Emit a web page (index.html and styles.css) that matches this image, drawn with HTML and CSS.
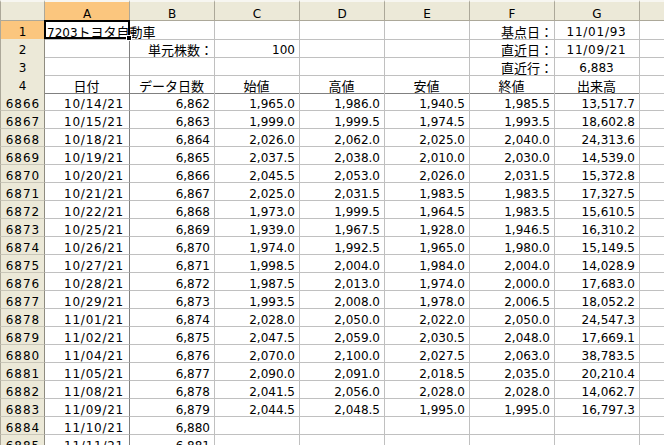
FILE: index.html
```html
<!DOCTYPE html>
<html lang="ja">
<head>
<meta charset="utf-8">
<title>Sheet</title>
<link rel="stylesheet" href="styles.css">
</head>
<body>
<div class="sheet">
  <div class="row hdr">
    <div class="h corner"></div>
    <div class="h col on">A</div>
    <div class="h col">B</div>
    <div class="h col">C</div>
    <div class="h col">D</div>
    <div class="h col">E</div>
    <div class="h col">F</div>
    <div class="h col">G</div>
    <div class="h col last"></div>
  </div>

  <div class="row">
    <div class="rh on">1</div>
    <div class="c a active"><span class="ov">7203<span class="jp">トヨタ自動車</span></span><div class="sel"><span class="handle"></span></div></div>
    <div class="c"></div>
    <div class="c"></div>
    <div class="c"></div>
    <div class="c"></div>
    <div class="c n lbl"><span class="jp">基点日：</span></div>
    <div class="c ct d">11/01/93</div>
    <div class="c x"></div>
  </div>
  <div class="row">
    <div class="rh">2</div>
    <div class="c a"></div>
    <div class="c n lbl"><span class="jp">単元株数：</span></div>
    <div class="c n">100</div>
    <div class="c"></div>
    <div class="c"></div>
    <div class="c n lbl"><span class="jp">直近日：</span></div>
    <div class="c ct d">11/09/21</div>
    <div class="c x"></div>
  </div>
  <div class="row">
    <div class="rh">3</div>
    <div class="c a"></div>
    <div class="c"></div>
    <div class="c"></div>
    <div class="c"></div>
    <div class="c"></div>
    <div class="c n lbl"><span class="jp">直近行：</span></div>
    <div class="c ct">6,883</div>
    <div class="c x"></div>
  </div>
  <div class="row titles">
    <div class="rh">4</div>
    <div class="c a ct"><span class="jp">日付</span></div>
    <div class="c ct"><span class="jp">データ日数</span></div>
    <div class="c ct"><span class="jp">始値</span></div>
    <div class="c ct"><span class="jp">高値</span></div>
    <div class="c ct"><span class="jp">安値</span></div>
    <div class="c ct"><span class="jp">終値</span></div>
    <div class="c ct"><span class="jp">出来高</span></div>
    <div class="c x"></div>
  </div>

  <div class="row"><div class="rh">6866</div><div class="c a n d">10/14/21</div><div class="c n">6,862</div><div class="c n">1,965.0</div><div class="c n">1,986.0</div><div class="c n">1,940.5</div><div class="c n">1,985.5</div><div class="c n">13,517.7</div><div class="c x"></div></div>
  <div class="row"><div class="rh">6867</div><div class="c a n d">10/15/21</div><div class="c n">6,863</div><div class="c n">1,999.0</div><div class="c n">1,999.5</div><div class="c n">1,974.5</div><div class="c n">1,993.5</div><div class="c n">18,602.8</div><div class="c x"></div></div>
  <div class="row"><div class="rh">6868</div><div class="c a n d">10/18/21</div><div class="c n">6,864</div><div class="c n">2,026.0</div><div class="c n">2,062.0</div><div class="c n">2,025.0</div><div class="c n">2,040.0</div><div class="c n">24,313.6</div><div class="c x"></div></div>
  <div class="row"><div class="rh">6869</div><div class="c a n d">10/19/21</div><div class="c n">6,865</div><div class="c n">2,037.5</div><div class="c n">2,038.0</div><div class="c n">2,010.0</div><div class="c n">2,030.0</div><div class="c n">14,539.0</div><div class="c x"></div></div>
  <div class="row"><div class="rh">6870</div><div class="c a n d">10/20/21</div><div class="c n">6,866</div><div class="c n">2,045.5</div><div class="c n">2,053.0</div><div class="c n">2,026.0</div><div class="c n">2,031.5</div><div class="c n">15,372.8</div><div class="c x"></div></div>
  <div class="row"><div class="rh">6871</div><div class="c a n d">10/21/21</div><div class="c n">6,867</div><div class="c n">2,025.0</div><div class="c n">2,031.5</div><div class="c n">1,983.5</div><div class="c n">1,983.5</div><div class="c n">17,327.5</div><div class="c x"></div></div>
  <div class="row"><div class="rh">6872</div><div class="c a n d">10/22/21</div><div class="c n">6,868</div><div class="c n">1,973.0</div><div class="c n">1,999.5</div><div class="c n">1,964.5</div><div class="c n">1,983.5</div><div class="c n">15,610.5</div><div class="c x"></div></div>
  <div class="row"><div class="rh">6873</div><div class="c a n d">10/25/21</div><div class="c n">6,869</div><div class="c n">1,939.0</div><div class="c n">1,967.5</div><div class="c n">1,928.0</div><div class="c n">1,946.5</div><div class="c n">16,310.2</div><div class="c x"></div></div>
  <div class="row"><div class="rh">6874</div><div class="c a n d">10/26/21</div><div class="c n">6,870</div><div class="c n">1,974.0</div><div class="c n">1,992.5</div><div class="c n">1,965.0</div><div class="c n">1,980.0</div><div class="c n">15,149.5</div><div class="c x"></div></div>
  <div class="row"><div class="rh">6875</div><div class="c a n d">10/27/21</div><div class="c n">6,871</div><div class="c n">1,998.5</div><div class="c n">2,004.0</div><div class="c n">1,984.0</div><div class="c n">2,004.0</div><div class="c n">14,028.9</div><div class="c x"></div></div>
  <div class="row"><div class="rh">6876</div><div class="c a n d">10/28/21</div><div class="c n">6,872</div><div class="c n">1,987.5</div><div class="c n">2,013.0</div><div class="c n">1,974.0</div><div class="c n">2,000.0</div><div class="c n">17,683.0</div><div class="c x"></div></div>
  <div class="row"><div class="rh">6877</div><div class="c a n d">10/29/21</div><div class="c n">6,873</div><div class="c n">1,993.5</div><div class="c n">2,008.0</div><div class="c n">1,978.0</div><div class="c n">2,006.5</div><div class="c n">18,052.2</div><div class="c x"></div></div>
  <div class="row"><div class="rh">6878</div><div class="c a n d">11/01/21</div><div class="c n">6,874</div><div class="c n">2,028.0</div><div class="c n">2,050.0</div><div class="c n">2,022.0</div><div class="c n">2,050.0</div><div class="c n">24,547.3</div><div class="c x"></div></div>
  <div class="row"><div class="rh">6879</div><div class="c a n d">11/02/21</div><div class="c n">6,875</div><div class="c n">2,047.5</div><div class="c n">2,059.0</div><div class="c n">2,030.5</div><div class="c n">2,048.0</div><div class="c n">17,669.1</div><div class="c x"></div></div>
  <div class="row"><div class="rh">6880</div><div class="c a n d">11/04/21</div><div class="c n">6,876</div><div class="c n">2,070.0</div><div class="c n">2,100.0</div><div class="c n">2,027.5</div><div class="c n">2,063.0</div><div class="c n">38,783.5</div><div class="c x"></div></div>
  <div class="row"><div class="rh">6881</div><div class="c a n d">11/05/21</div><div class="c n">6,877</div><div class="c n">2,090.0</div><div class="c n">2,091.0</div><div class="c n">2,018.5</div><div class="c n">2,035.0</div><div class="c n">20,210.4</div><div class="c x"></div></div>
  <div class="row"><div class="rh">6882</div><div class="c a n d">11/08/21</div><div class="c n">6,878</div><div class="c n">2,041.5</div><div class="c n">2,056.0</div><div class="c n">2,028.0</div><div class="c n">2,028.0</div><div class="c n">14,062.7</div><div class="c x"></div></div>
  <div class="row"><div class="rh">6883</div><div class="c a n d">11/09/21</div><div class="c n">6,879</div><div class="c n">2,044.5</div><div class="c n">2,048.5</div><div class="c n">1,995.0</div><div class="c n">1,995.0</div><div class="c n">16,797.3</div><div class="c x"></div></div>
  <div class="row"><div class="rh">6884</div><div class="c a n d">11/10/21</div><div class="c n">6,880</div><div class="c"></div><div class="c"></div><div class="c"></div><div class="c"></div><div class="c"></div><div class="c x"></div></div>
  <div class="row"><div class="rh">6885</div><div class="c a n d">11/11/21</div><div class="c n">6,881</div><div class="c"></div><div class="c"></div><div class="c"></div><div class="c"></div><div class="c"></div><div class="c x"></div></div>
</div>
</body>
</html>
```

FILE: styles.css
```css
* { box-sizing: border-box; }

html, body {
  margin: 0;
  padding: 0;
  width: 664px;
  height: 445px;
  overflow: hidden;
  background: #ffffff;
}

body {
  font-family: "DejaVu Sans", "Noto Sans CJK JP", sans-serif;
  font-size: 12px;
  color: #000000;
}

.sheet {
  display: flex;
  flex-direction: column;
}

.row {
  display: grid;
  grid-template-columns: 45px repeat(7, 85px) 1fr;
  height: 18px;
}

.row.hdr {
  height: 21px;
}

/* column headers */
.h {
  background: #ece9d8;
  border-top: 2px solid #f7f6f1;
  border-right: 1px solid #aca899;
  border-bottom: 1px solid #aca899;
  text-align: center;
  padding-top: 6px;
  line-height: 12px;
}

.h.corner {
  border-left: 1px solid #aca899;
}

.h.on {
  background: #fbc67e;
  border-bottom-color: #2b3c84;
}

.h.last {
  border-right: none;
}

/* row headers */
.rh {
  background: #ece9d8;
  border-left: 1px solid #aca899;
  border-right: 1px solid #8f8c80;
  border-bottom: 1px solid #c9c6b8;
  text-align: center;
  padding-top: 5px;
  line-height: 12px;
  letter-spacing: 1px;
  padding-left: 1px;
}

.rh.on {
  background: #fbc67e;
  border-bottom-color: #2b3c84;
}

/* cells */
.c {
  border-right: 1px solid #c0c0c0;
  border-bottom: 1px solid #c0c0c0;
  padding: 5px 4px 0 3px;
  line-height: 12px;
  white-space: nowrap;
  position: relative;
}

.c.a {
  border-right-color: #808080;
}

.c.x {
  border-right: none;
}

.titles .c {
  border-bottom-color: #808080;
}

.titles .c.x {
  border-bottom-color: #c0c0c0;
}

.n { text-align: right; }
.ct { text-align: center; }

.lbl { padding-right: 1px; }

.d {
  letter-spacing: 0.75px;
}

.c.a.d {
  padding-right: 5px;
}

.jp {
  font-family: "Noto Sans CJK JP", sans-serif;
  font-size: 13px;
  letter-spacing: 0;
}

/* active cell A1 */
.active {
  padding-left: 2px;
  overflow: visible;
}

.ov {
  position: relative;
  z-index: 1;
}

.sel {
  position: absolute;
  left: -1px;
  top: -1px;
  width: 86px;
  height: 19px;
  border: 2px solid #000000;
  z-index: 2;
}

.handle {
  position: absolute;
  right: -4px;
  bottom: -4px;
  width: 6px;
  height: 6px;
  background: #000000;
  border: 1px solid #ffffff;
}
```
